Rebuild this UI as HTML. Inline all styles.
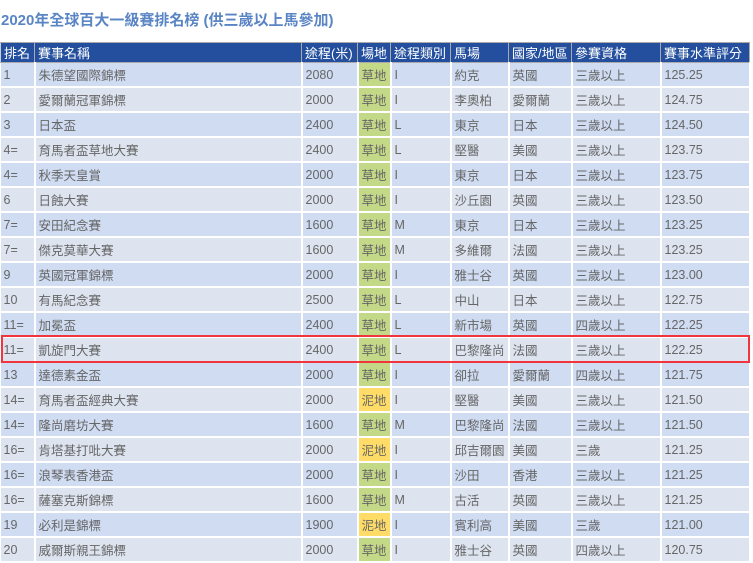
<!DOCTYPE html><html><head><meta charset="utf-8"><style>
body{margin:0;width:753px;height:563px;overflow:hidden;background:#fff;font-family:"Liberation Sans","Noto Sans CJK TC",sans-serif;}
h1{position:absolute;left:1px;top:9px;margin:0;font-size:15px;font-weight:bold;color:#5a85c4;}
table{position:absolute;left:0;top:42px;border-collapse:collapse;table-layout:fixed;width:749px;}
th{background:#234f9e;color:#fff;font-weight:normal;font-size:13px;text-align:left;height:18px;padding:0 0 0 3px;border:1px solid #aaa;border-left:1px solid #ccd;white-space:nowrap;overflow:hidden}
td{height:23px;padding:0 0 0 3px;font-size:12.5px;color:#666;border:2px solid #fff;border-top:0;white-space:nowrap;overflow:hidden}
tr:nth-child(even) td{background:#cfdcf2}
tr:nth-child(odd) td{background:#dde4f0}
td.g{background:#c4d987!important}
td.m{background:#fedc67!important}
td:first-child{border-left:0}
.box{position:absolute;left:1px;top:335px;width:745px;height:24px;border:2px solid #f0363c;}
</style></head><body>
<h1>2020年全球百大一級賽排名榜 (供三歲以上馬參加)</h1>
<table>
<colgroup><col style="width:34px"><col style="width:267px"><col style="width:56px"><col style="width:33px"><col style="width:60px"><col style="width:58px"><col style="width:63px"><col style="width:89px"><col style="width:89px"></colgroup>
<tr><th>排名</th><th>賽事名稱</th><th>途程(米)</th><th>場地</th><th>途程類別</th><th>馬場</th><th>國家/地區</th><th>參賽資格</th><th>賽事水準評分</th></tr>
<tr><td>1</td><td>朱德望國際錦標</td><td>2080</td><td class="g">草地</td><td>I</td><td>約克</td><td>英國</td><td>三歲以上</td><td>125.25</td></tr>
<tr><td>2</td><td>愛爾蘭冠軍錦標</td><td>2000</td><td class="g">草地</td><td>I</td><td>李奧柏</td><td>愛爾蘭</td><td>三歲以上</td><td>124.75</td></tr>
<tr><td>3</td><td>日本盃</td><td>2400</td><td class="g">草地</td><td>L</td><td>東京</td><td>日本</td><td>三歲以上</td><td>124.50</td></tr>
<tr><td>4=</td><td>育馬者盃草地大賽</td><td>2400</td><td class="g">草地</td><td>L</td><td>堅醫</td><td>美國</td><td>三歲以上</td><td>123.75</td></tr>
<tr><td>4=</td><td>秋季天皇賞</td><td>2000</td><td class="g">草地</td><td>I</td><td>東京</td><td>日本</td><td>三歲以上</td><td>123.75</td></tr>
<tr><td>6</td><td>日蝕大賽</td><td>2000</td><td class="g">草地</td><td>I</td><td>沙丘園</td><td>英國</td><td>三歲以上</td><td>123.50</td></tr>
<tr><td>7=</td><td>安田紀念賽</td><td>1600</td><td class="g">草地</td><td>M</td><td>東京</td><td>日本</td><td>三歲以上</td><td>123.25</td></tr>
<tr><td>7=</td><td>傑克莫華大賽</td><td>1600</td><td class="g">草地</td><td>M</td><td>多維爾</td><td>法國</td><td>三歲以上</td><td>123.25</td></tr>
<tr><td>9</td><td>英國冠軍錦標</td><td>2000</td><td class="g">草地</td><td>I</td><td>雅士谷</td><td>英國</td><td>三歲以上</td><td>123.00</td></tr>
<tr><td>10</td><td>有馬紀念賽</td><td>2500</td><td class="g">草地</td><td>L</td><td>中山</td><td>日本</td><td>三歲以上</td><td>122.75</td></tr>
<tr><td>11=</td><td>加冕盃</td><td>2400</td><td class="g">草地</td><td>L</td><td>新市場</td><td>英國</td><td>四歲以上</td><td>122.25</td></tr>
<tr><td>11=</td><td>凱旋門大賽</td><td>2400</td><td class="g">草地</td><td>L</td><td>巴黎隆尚</td><td>法國</td><td>三歲以上</td><td>122.25</td></tr>
<tr><td>13</td><td>達德素金盃</td><td>2000</td><td class="g">草地</td><td>I</td><td>卻拉</td><td>愛爾蘭</td><td>四歲以上</td><td>121.75</td></tr>
<tr><td>14=</td><td>育馬者盃經典大賽</td><td>2000</td><td class="m">泥地</td><td>I</td><td>堅醫</td><td>美國</td><td>三歲以上</td><td>121.50</td></tr>
<tr><td>14=</td><td>隆尚磨坊大賽</td><td>1600</td><td class="g">草地</td><td>M</td><td>巴黎隆尚</td><td>法國</td><td>三歲以上</td><td>121.50</td></tr>
<tr><td>16=</td><td>肯塔基打吡大賽</td><td>2000</td><td class="m">泥地</td><td>I</td><td>邱吉爾園</td><td>美國</td><td>三歲</td><td>121.25</td></tr>
<tr><td>16=</td><td>浪琴表香港盃</td><td>2000</td><td class="g">草地</td><td>I</td><td>沙田</td><td>香港</td><td>三歲以上</td><td>121.25</td></tr>
<tr><td>16=</td><td>薩塞克斯錦標</td><td>1600</td><td class="g">草地</td><td>M</td><td>古活</td><td>英國</td><td>三歲以上</td><td>121.25</td></tr>
<tr><td>19</td><td>必利是錦標</td><td>1900</td><td class="m">泥地</td><td>I</td><td>賓利高</td><td>美國</td><td>三歲</td><td>121.00</td></tr>
<tr><td>20</td><td>威爾斯親王錦標</td><td>2000</td><td class="g">草地</td><td>I</td><td>雅士谷</td><td>英國</td><td>四歲以上</td><td>120.75</td></tr>
</table>
<div class="box"></div>
</body></html>
